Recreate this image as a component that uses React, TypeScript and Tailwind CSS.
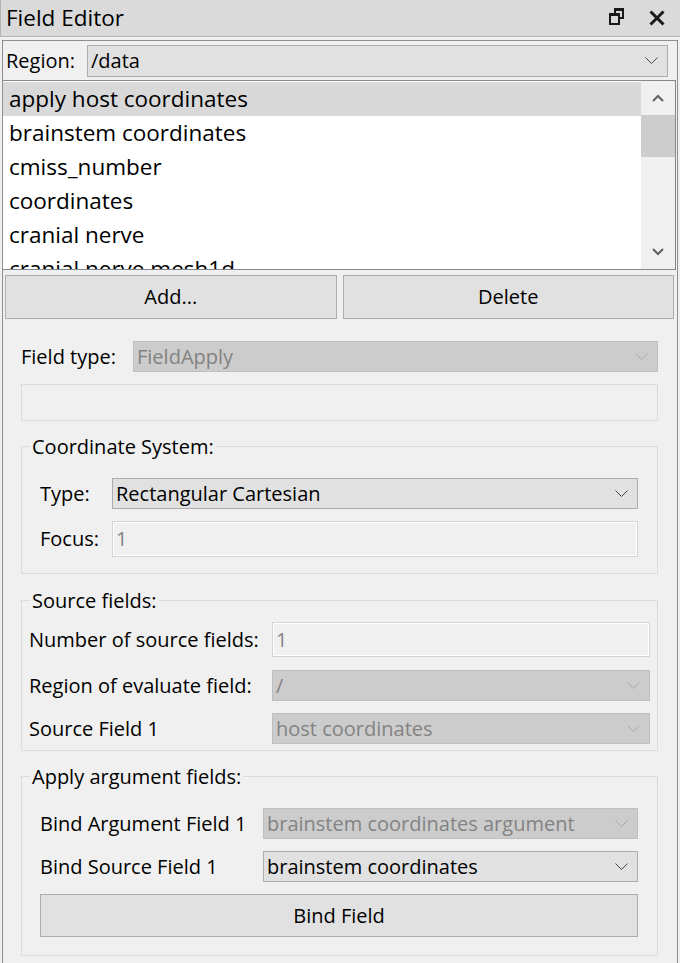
import React from "react";

const font = { fontFamily: '"Open Sans", "Liberation Sans", sans-serif' };

const items = [
  "apply host coordinates",
  "brainstem coordinates",
  "cmiss_number",
  "coordinates",
  "cranial nerve",
  "cranial nerve mesh1d",
];

function Chevron({ disabled }: { disabled?: boolean }) {
  return (
    <svg width="13" height="8" viewBox="0 0 13 8" className="shrink-0">
      <path
        d="M0.5 0.5 L6.5 6.5 L12.5 0.5"
        fill="none"
        stroke={disabled ? "#a8a8a8" : "#444"}
        strokeWidth="1"
      />
    </svg>
  );
}

function Combo({
  value,
  disabled,
  className,
}: {
  value: string;
  disabled?: boolean;
  className: string;
}) {
  return (
    <div
      className={`flex items-center justify-between pl-[3px] pr-[9px] border ${
        disabled
          ? "bg-[#cccccc] border-[#bfbfbf] text-[#838383]"
          : "bg-[#e1e1e1] border-[#adadad] text-black"
      } ${className}`}
    >
      <span className="truncate">{value}</span>
      <Chevron disabled={disabled} />
    </div>
  );
}

function LineEdit({ value, className }: { value: string; className: string }) {
  return (
    <div
      className={`flex items-center pl-[3px] border border-[#d4d4d4] bg-[#f0f0f0] text-[#838383] shadow-[inset_0_0_0_1px_#ffffff] ${className}`}
    >
      {value}
    </div>
  );
}

function Group({
  title,
  className,
  children,
}: {
  title: string;
  className: string;
  children: React.ReactNode;
}) {
  return (
    <div className={`border border-[#dcdcdc] flex flex-col ${className}`}>
      <div className="-mt-[14px] h-[28px] leading-[28px] ml-[8px] px-[2px] w-fit bg-[#f0f0f0]">
        {title}
      </div>
      {children}
    </div>
  );
}

export default function App() {
  return (
    <div
      className="w-[680px] h-[963px] overflow-hidden bg-[#f0f0f0] text-black text-[20px] flex flex-col"
      style={font}
    >
      {/* Title bar */}
      <div className="h-[37px] shrink-0 bg-[#dadada] border-b border-l border-[#b4b4b4] flex items-center pl-[5px] relative">
        <span className="text-[22.5px]">Field Editor</span>
        <svg width="20" height="20" viewBox="0 0 20 20" className="absolute left-[606px] top-[7px]">
          <g fill="#1a1a1a">
            <rect x="2" y="6" width="11" height="3" />
            <rect x="2" y="6" width="2" height="12" />
            <rect x="11" y="6" width="2" height="12" />
            <rect x="2" y="16" width="11" height="2" />
            <rect x="7" y="1" width="10" height="3" />
            <rect x="15" y="1" width="2" height="11" />
            <rect x="7" y="1" width="2" height="5" />
            <rect x="13" y="10" width="4" height="2" />
          </g>
        </svg>
        <svg width="18" height="18" viewBox="0 0 18 18" className="absolute left-[647px] top-[9px]">
          <path d="M2.5 2.5 L15.5 15.5 M15.5 2.5 L2.5 15.5" stroke="#1a1a1a" strokeWidth="3" />
        </svg>
      </div>

      {/* Content */}
      <div className="mt-[3px] ml-[2px] w-[676px] flex-1 border-t border-l border-r border-[#8f8f8f] flex flex-col">
        {/* Region row */}
        <div className="flex items-center h-[32px] mt-[4px] pl-[3px]">
          <span className="w-[81px]">Region:</span>
          <Combo value="/data" className="w-[581px] h-[32px]" />
        </div>

        {/* List */}
        <div className="mt-[3px] mr-[1px] h-[190px] border-t border-b border-r border-[#828790] bg-white flex">
          <div className="flex-1 pt-[1px] overflow-hidden">
            {items.map((it, i) => (
              <div
                key={it}
                className={`h-[34px] flex items-center pl-[6px] text-[22.5px] ${
                  i === 0 ? "bg-[#d9d9d9]" : ""
                }`}
              >
                {it}
              </div>
            ))}
          </div>
          <div className="w-[34px] bg-[#f0f0f0] flex flex-col items-center">
            <div className="h-[34px] flex items-center justify-center">
              <svg width="12" height="8" viewBox="0 0 12 8">
                <path d="M1 7 L6 2 L11 7" fill="none" stroke="#606060" strokeWidth="2" />
              </svg>
            </div>
            <div className="w-full h-[42px] bg-[#cdcdcd]" />
            <div className="flex-1" />
            <div className="h-[34px] flex items-center justify-center">
              <svg width="12" height="8" viewBox="0 0 12 8">
                <path d="M1 1 L6 6 L11 1" fill="none" stroke="#606060" strokeWidth="2" />
              </svg>
            </div>
          </div>
        </div>

        {/* Buttons */}
        <div className="flex gap-[6px] pl-[2px] pr-[3px] mt-[5px]">
          <button className="flex-1 h-[44px] bg-[#e1e1e1] border border-[#adadad]">Add...</button>
          <button className="flex-1 h-[44px] bg-[#e1e1e1] border border-[#adadad]">Delete</button>
        </div>

        {/* Form */}
        <div className="pl-[18px] pr-[19px] flex flex-col">
          <div className="flex items-center mt-[22px]">
            <span className="w-[112px]">Field type:</span>
            <Combo value="FieldApply" disabled className="flex-1 h-[31px]" />
          </div>
          <div className="mt-[12px] h-[37px] border border-[#dcdcdc]" />

          <Group title="Coordinate System:" className="mt-[25px] pb-[16px]">
            <div className="flex items-center mt-[17px] pl-[18px] pr-[19px]">
              <span className="w-[72px]">Type:</span>
              <Combo value="Rectangular Cartesian" className="flex-1 h-[31px]" />
            </div>
            <div className="flex items-center mt-[12px] pl-[18px] pr-[19px]">
              <span className="w-[72px]">Focus:</span>
              <LineEdit value="1" className="flex-1 h-[36px]" />
            </div>
          </Group>

          <Group title="Source fields:" className="mt-[26px] pb-[6px]">
            <div className="flex items-center mt-[7px] pl-[7px] pr-[7px]">
              <span className="w-[243px] whitespace-nowrap">Number of source fields:</span>
              <LineEdit value="1" className="flex-1 h-[35px]" />
            </div>
            <div className="flex items-center mt-[13px] pl-[7px] pr-[7px]">
              <span className="w-[243px] whitespace-nowrap">Region of evaluate field:</span>
              <Combo value="/" disabled className="flex-1 h-[31px]" />
            </div>
            <div className="flex items-center mt-[12px] pl-[7px] pr-[7px]">
              <span className="w-[243px]">Source Field 1</span>
              <Combo value="host coordinates" disabled className="flex-1 h-[31px]" />
            </div>
          </Group>

          <Group title="Apply argument fields:" className="mt-[25px] pb-[18px]">
            <div className="flex items-center mt-[17px] pl-[18px] pr-[19px]">
              <span className="w-[223px] whitespace-nowrap">Bind Argument Field 1</span>
              <Combo value="brainstem coordinates argument" disabled className="flex-1 h-[31px]" />
            </div>
            <div className="flex items-center mt-[12px] pl-[18px] pr-[19px]">
              <span className="w-[223px]">Bind Source Field 1</span>
              <Combo value="brainstem coordinates" className="flex-1 h-[31px]" />
            </div>
            <div className="mt-[12px] pl-[18px] pr-[19px]">
              <button className="w-full h-[43px] bg-[#e1e1e1] border border-[#adadad]">Bind Field</button>
            </div>
          </Group>
        </div>
      </div>
    </div>
  );
}
